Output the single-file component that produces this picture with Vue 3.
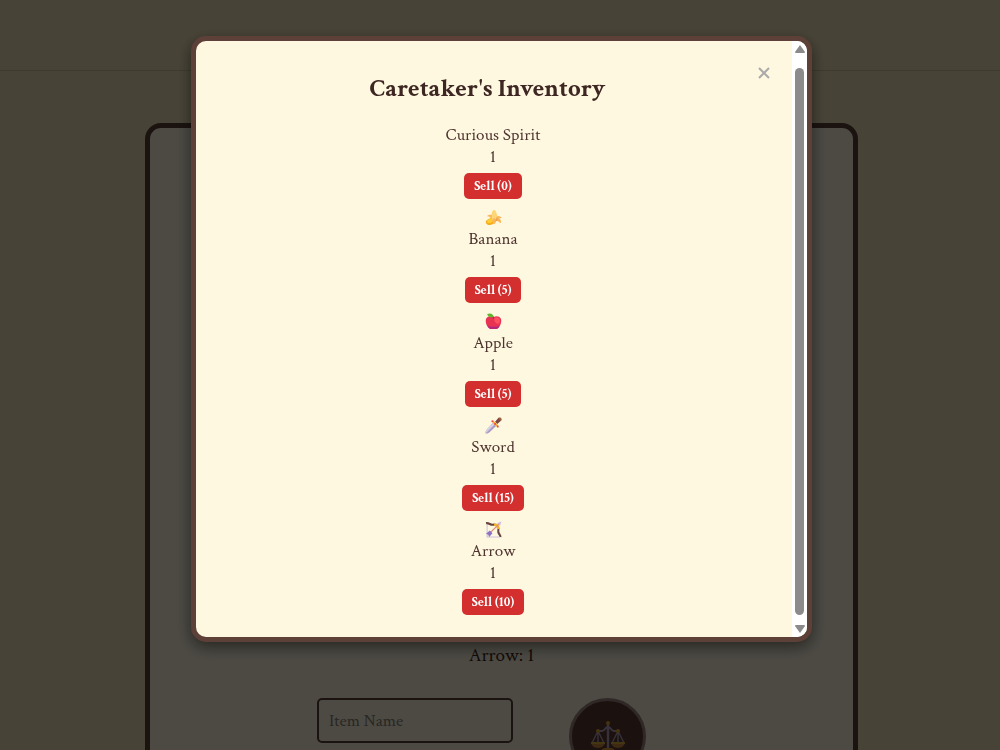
<script setup>
import { ref } from 'vue';

const isOpen = ref(true);
const itemName = ref('');

const items = ref([
  { id: 'spirit', name: 'Curious Spirit', qty: 1, price: 0 },
  { id: 'banana', name: 'Banana', qty: 1, price: 5 },
  { id: 'apple', name: 'Apple', qty: 1, price: 5 },
  { id: 'sword', name: 'Sword', qty: 1, price: 15 },
  { id: 'arrow', name: 'Arrow', qty: 1, price: 10 },
]);

const sellItem = (item) => {
  item.qty -= 1;
  items.value = items.value.filter(i => i.qty > 0);
};

const closeModal = () => {
  isOpen.value = false;
};
</script>

<template>
  <div class="page">
    <header class="topbar"></header>

    <main class="card">
      <p class="stock">Arrow: 1</p>
      <form class="trade-row" @submit.prevent>
        <input v-model="itemName" type="text" class="item-input" placeholder="Item Name" aria-label="Item Name" />
        <button type="submit" class="trade-btn" aria-label="Trade">
          <svg viewBox="0 0 34 34" class="scales" aria-hidden="true">
            <g fill="none" stroke="#b9a8c4" stroke-width="1.3">
              <path d="M17 3v28" stroke-width="2.4" />
              <path d="M7 11h4c3 0 3-4 6-4s3 4 6 4h4" stroke-width="2" />
              <path d="M7 11L1.500 22M7 11l5.500 11M7 11v11M27 11l-5.500 11M27 11l5.500 11M27 11v11" />
            </g>
            <path d="M0 22h14c0 3-3 6-7 6s-7-3-7-6zM20 22h14c0 3-3 6-7 6s-7-3-7-6z" fill="#d08a3c" />
            <path d="M0 22h14v2H0zM20 22h14v2H20z" fill="#e5b242" />
            <path d="M10 31c1-3 4-3 7-3s6 0 7 3z" fill="#e5a13a" />
            <g fill="#e5a92f">
              <circle cx="17" cy="3" r="2" />
              <circle cx="7" cy="11" r="2" />
              <circle cx="27" cy="11" r="2" />
            </g>
          </svg>
        </button>
      </form>
    </main>

    <div v-if="isOpen" class="overlay">
      <section class="modal" role="dialog" aria-labelledby="inventory-title">
        <div class="modal-body">
          <div class="modal-head">
            <h2 id="inventory-title">Caretaker's Inventory</h2>
            <button type="button" class="close-btn" aria-label="Close" @click="closeModal">
              <svg viewBox="0 0 12 12" aria-hidden="true">
                <path d="M1 1l10 10M11 1L1 11" fill="none" stroke="#aaa" stroke-width="2" />
              </svg>
            </button>
          </div>

          <ul class="items">
            <li v-for="item in items" :key="item.id" class="item">
              <span v-if="item.id !== 'spirit'" class="item-icon">
                <svg viewBox="0 0 32 32" aria-hidden="true">
                  <g v-if="item.id === 'banana'">
                    <path d="M14 13c-2 4-7 5-11 8-3 3-1 8 4 9 7 1 13-4 14-11z" fill="#f5ad1b" />
                    <path d="M12 16c-3 4-7 4-8 7s3 4 7 3 7-5 8-8z" fill="#ffcf35" />
                    <path d="M14 4c1-3 5-3 6 0 2 4 5 10 4 17l-10-1c-3-5-2-12 0-16z" fill="#ffd677" />
                    <path d="M13 11c-4-1-8 0-10 3 4-1 6 1 10 6l4 9c3-2 4-5 4-8l9 6c1-4 0-6-3-9 2-1 3-1 5-1-3-4-7-5-10-3l-2 6-3-3-4 3z" fill="#f9b85e" />
                    <path d="M17 15l3 6 3-6 1 7-4 1z" fill="#eda04b" />
                  </g>
                  <g v-else-if="item.id === 'apple'">
                    <path d="M16 8c4-3 11-3 14 3 2 6-1 14-6 18-3 2-5 1-8 1s-5 1-8-1C3 25 0 17 2 11c3-6 10-6 14-3z" fill="#e93352" />
                    <path d="M4 23c2 5 5 7 8 7 3 0 8 1 11-1 3-1 4-3 5-6-6 4-18 4-24 0z" fill="#b5277f" />
                    <path d="M18 9c4-2 9-1 10 4s-2 8-5 7-7-5-5-11z" fill="#fb5262" />
                    <path d="M16 11c0-3-1-5-2-6" fill="none" stroke="#7a3c35" stroke-width="2" />
                    <path d="M16 7C10 10 5 7 4 2c6-2 11-1 12 5z" fill="#62b52e" />
                  </g>
                  <g v-else-if="item.id === 'sword'">
                    <path d="M15 11l6 6L8 29c-2 2-5 2-7 2 0-2 0-5 2-7z" fill="#a99dc3" />
                    <path d="M15 11l3 3L2 30c-1-2 0-4 1-6z" fill="#d6d1e3" />
                    <path d="M19 9l6-7c3-2 7 2 5 5l-7 6z" fill="#7b4541" />
                    <path d="M25 2c2-2 5-1 6 1s0 4-2 5z" fill="#a25e43" />
                    <path d="M13 9l3-2 9 9-2 3z" fill="#f6ae28" />
                    <circle cx="14" cy="8" r="2" fill="#ef4e42" />
                    <circle cx="24" cy="18" r="2" fill="#ef4e42" />
                    <circle cx="19" cy="13" r="2" fill="#ef4e42" />
                  </g>
                  <g v-else>
                    <path d="M4 6v24h24" fill="none" stroke="#cfc1df" stroke-width="2" />
                    <path d="M2 4c6-1 8 4 13 3 8-1 12 5 10 12-1 5 5 7 4 11" fill="none" stroke="#68453f" stroke-width="4" />
                    <path d="M17 7c5 0 8 3 8 8" fill="none" stroke="#f3b32e" stroke-width="5" />
                    <path d="M8 24L27 5" stroke="#df8c73" stroke-width="2" />
                    <path d="M22 4l9-3-3 9-2-4z" fill="#c9bedb" />
                    <path d="M2 24l7-6 5 5-6 7-2-4z" fill="#8d72c6" />
                  </g>
                </svg>
              </span>
              <span class="item-line">{{ item.name }}</span>
              <span class="item-line">{{ item.qty }}</span>
              <button type="button" class="sell-btn" @click="sellItem(item)">Sell ({{ item.price }})</button>
            </li>
          </ul>
        </div>

        <div class="scrollbar" aria-hidden="true">
          <svg viewBox="0 0 12 8"><path d="M6 0l5 7q0 1-1 1H2q-1 0-1-1z" /></svg>
          <span class="scroll-thumb"></span>
          <svg viewBox="0 0 12 8"><path d="M6 8L1 1q0-1 1-1h8q1 0 1 1z" /></svg>
        </div>
      </section>
    </div>
  </div>
</template>

<style>
body {
  margin: 0;
  background: #f0e2b8;
}
</style>

<style scoped>
.page {
  height: 100vh;
  overflow: hidden;
  box-sizing: border-box;
  padding-left: 3px;
  background: #f0e2b8;
  color: #3e2723;
  font-family: "Crimson Text", "Liberation Serif", serif;
}

.topbar {
  height: 70px;
  margin-left: -3px;
  border-bottom: 1px solid #d2c49a;
}

.card {
  box-sizing: border-box;
  width: 100%;
  max-width: 713px;
  margin: 52px auto 0;
  padding: 516px 20px 60px;
  border: 5px solid #5d4037;
  border-radius: 16px;
  background: #fff8e1;
}

.stock {
  margin: 0 0 30px;
  font-size: 19px;
  line-height: 24px;
  text-align: center;
}

.trade-row {
  display: flex;
  justify-content: center;
  align-items: flex-start;
  gap: 56px;
  padding-right: 40px;
}

.item-input {
  box-sizing: border-box;
  width: 196px;
  height: 45px;
  padding: 0 10px;
  border: 2px solid #5d4037;
  border-radius: 5px;
  background: transparent;
  color: #3e2723;
  font-family: inherit;
  font-size: 17px;
}

.item-input::placeholder {
  color: #8a8378;
}

.trade-btn {
  display: flex;
  justify-content: center;
  align-items: center;
  width: 77px;
  height: 77px;
  padding: 0;
  border: 3px solid #a1887f;
  border-radius: 50%;
  background: #5d3a33;
  cursor: pointer;
}

.scales {
  width: 34px;
  height: 34px;
}

.overlay {
  position: fixed;
  inset: 0;
  display: flex;
  justify-content: center;
  align-items: flex-start;
  padding: 36px 0 0 3px;
  background: rgba(0, 0, 0, 0.7);
}

.modal {
  display: flex;
  box-sizing: border-box;
  width: 100%;
  max-width: 621px;
  max-height: calc(100vh - 36px);
  overflow: hidden;
  border: 5px solid #5d4037;
  border-radius: 15px;
  background: #fff8e1;
  box-shadow: 0 5px 15px rgba(0, 0, 0, 0.5);
}

.modal-body {
  flex: 1;
  padding: 24px 16px 15px;
}

.modal-head {
  display: flex;
  align-items: flex-start;
  margin-bottom: 12px;
}

h2 {
  flex: 1;
  margin: 8px 0 0;
  padding-left: 11px;
  color: #3e2723;
  font-size: 25px;
  line-height: 32px;
  text-align: center;
}

.close-btn {
  width: 24px;
  height: 16px;
  padding: 0 6px;
  border: none;
  background: none;
  cursor: pointer;
}

.close-btn svg {
  display: block;
  width: 12px;
  height: 12px;
}

.items {
  margin: 0;
  padding: 7px 2px 0 0;
  list-style: none;
}

.item {
  display: flex;
  flex-direction: column;
  align-items: center;
  padding-bottom: 7px;
}

.item-icon {
  display: flex;
  align-items: center;
  height: 22px;
}

.item-icon svg {
  width: 17px;
  height: 17px;
}

.item-line {
  color: #4e342e;
  font-size: 17px;
  line-height: 22px;
}

.sell-btn {
  height: 26px;
  margin-top: 5px;
  padding: 0 10px;
  border: none;
  border-radius: 5px;
  background: #d32f2f;
  color: white;
  font-family: inherit;
  font-size: 13px;
  font-weight: 700;
  cursor: pointer;
}

.scrollbar {
  display: flex;
  flex-direction: column;
  align-items: center;
  width: 15px;
  padding: 4px 0;
  box-sizing: border-box;
  background: white;
}

.scrollbar svg {
  width: 12px;
  height: 8px;
  fill: #8b8b8b;
}

.scroll-thumb {
  flex: 1;
  width: 9px;
  margin: 15px 0 10px;
  border-radius: 5px;
  background: #8b8b8b;
}
</style>
